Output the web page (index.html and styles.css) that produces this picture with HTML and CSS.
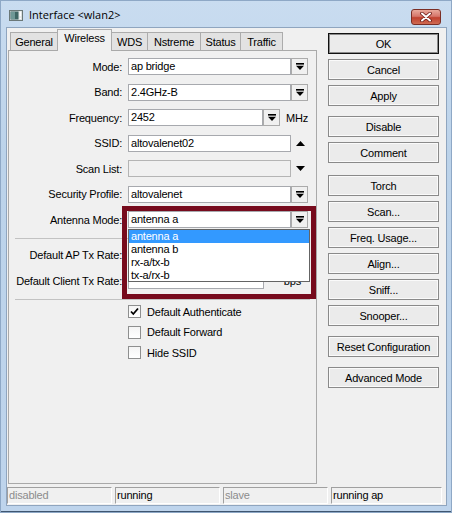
FILE: index.html
```html
<!DOCTYPE html>
<html>
<head>
<meta charset="utf-8">
<link rel="stylesheet" href="styles.css">
</head>
<body>
<div class="window">
  <div class="titlebar">
    <svg class="appicon" width="14" height="11" viewBox="0 0 14 11">
      <rect x="0.5" y="0.5" width="13" height="10" fill="#d8dede" stroke="#6b7878"/>
      <rect x="1.5" y="1.5" width="8" height="8" fill="#3f6664"/>
      <rect x="2" y="2" width="4" height="7" fill="#6f9896"/>
      <rect x="10.5" y="1.5" width="1.6" height="5" fill="#ffffff"/>
      <rect x="10.5" y="7.5" width="1.6" height="1.6" fill="#ffffff"/>
    </svg>
    <span class="title">Interface &lt;wlan2&gt;</span>
    <div class="close">
      <svg width="14" height="10" viewBox="0 0 14 10">
        <path d="M3 1.5 L11 8.5 M11 1.5 L3 8.5" stroke="#6a1a14" stroke-width="3.6" stroke-linecap="round"/>
        <path d="M3 1.5 L11 8.5 M11 1.5 L3 8.5" stroke="#ffffff" stroke-width="2" stroke-linecap="round"/>
      </svg>
    </div>
  </div>
  <div class="client">
    <div class="main">
      <div class="left">
        <div class="tabs">
          <div class="tab w-general">General</div>
          <div class="tab sel w-wireless">Wireless</div>
          <div class="tab w-wds">WDS</div>
          <div class="tab w-nstreme">Nstreme</div>
          <div class="tab w-status">Status</div>
          <div class="tab w-traffic">Traffic</div>
        </div>
        <div class="panel">
          <div class="form">
            <div class="row">
              <span class="lbl">Mode:</span>
              <div class="field long">ap bridge</div>
              <div class="ddbtn"><svg width="8" height="7" viewBox="0 0 8 7"><rect x="0" y="0" width="8" height="1.6"/><path d="M0 2.8H8L4 7Z"/></svg></div>
            </div>
            <div class="row">
              <span class="lbl">Band:</span>
              <div class="field long">2.4GHz-B</div>
              <div class="ddbtn"><svg width="8" height="7" viewBox="0 0 8 7"><rect x="0" y="0" width="8" height="1.6"/><path d="M0 2.8H8L4 7Z"/></svg></div>
            </div>
            <div class="row">
              <span class="lbl">Frequency:</span>
              <div class="field freq">2452</div>
              <div class="ddbtn"><svg width="8" height="7" viewBox="0 0 8 7"><rect x="0" y="0" width="8" height="1.6"/><path d="M0 2.8H8L4 7Z"/></svg></div>
              <span class="unit">MHz</span>
            </div>
            <div class="row">
              <span class="lbl">SSID:</span>
              <div class="field long">altovalenet02</div>
              <svg class="arrow" width="9" height="5" viewBox="0 0 9 5"><path d="M0 5H9L4.5 0Z"/></svg>
            </div>
            <div class="row">
              <span class="lbl">Scan List:</span>
              <div class="field long disabled"></div>
              <svg class="arrow" width="9" height="5" viewBox="0 0 9 5"><path d="M0 0H9L4.5 5Z"/></svg>
            </div>
            <div class="row">
              <span class="lbl">Security Profile:</span>
              <div class="field long">altovalenet</div>
              <div class="ddbtn"><svg width="8" height="7" viewBox="0 0 8 7"><rect x="0" y="0" width="8" height="1.6"/><path d="M0 2.8H8L4 7Z"/></svg></div>
            </div>
            <div class="row">
              <span class="lbl">Antenna Mode:</span>
              <div class="field long">antenna a</div>
              <div class="ddbtn"><svg width="8" height="7" viewBox="0 0 8 7"><rect x="0" y="0" width="8" height="1.6"/><path d="M0 2.8H8L4 7Z"/></svg></div>
            </div>
          </div>
          <div class="sep"></div>
          <div class="rates">
            <div class="row">
              <span class="lbl">Default AP Tx Rate:</span>
              <div class="field rate"></div>
              <span class="dash">-</span>
              <span class="bps">bps</span>
            </div>
            <div class="row">
              <span class="lbl">Default Client Tx Rate:</span>
              <div class="field rate"></div>
              <span class="dash">-</span>
              <span class="bps">bps</span>
            </div>
          </div>
          <div class="sep sep2"></div>
          <div class="checks">
            <div class="chk">
              <span class="box"><svg width="11" height="11" viewBox="0 0 11 11"><path d="M2 5.5 L4.3 8 L9 2.5" fill="none" stroke="#000" stroke-width="1.8"/></svg></span>
              <span class="chklbl">Default Authenticate</span>
            </div>
            <div class="chk">
              <span class="box"></span>
              <span class="chklbl">Default Forward</span>
            </div>
            <div class="chk">
              <span class="box"></span>
              <span class="chklbl">Hide SSID</span>
            </div>
          </div>
          <div class="highlight"></div>
          <div class="droplist">
            <div class="opt active">antenna a</div>
            <div class="opt">antenna b</div>
            <div class="opt">rx-a/tx-b</div>
            <div class="opt">tx-a/rx-b</div>
          </div>
        </div>
      </div>
      <div class="buttons">
        <div class="btn default">OK</div>
        <div class="btn">Cancel</div>
        <div class="btn">Apply</div>
        <div class="btn g10">Disable</div>
        <div class="btn">Comment</div>
        <div class="btn g12">Torch</div>
        <div class="btn">Scan...</div>
        <div class="btn">Freq. Usage...</div>
        <div class="btn">Align...</div>
        <div class="btn">Sniff...</div>
        <div class="btn">Snooper...</div>
        <div class="btn g10">Reset Configuration</div>
        <div class="btn g10">Advanced Mode</div>
      </div>
    </div>
    <div class="status">
      <div class="cell c1 dim">disabled</div>
      <div class="cell c2">running</div>
      <div class="cell c3 dim">slave</div>
      <div class="cell c4">running ap</div>
    </div>
  </div>
</div>
</body>
</html>
```

FILE: styles.css
```css
* { box-sizing: border-box; }

body {
  margin: 0;
  font-family: "Liberation Sans", Arial, sans-serif;
  font-size: 11px;
  letter-spacing: -0.2px;
  color: #000;
  background: #fff;
}

.window {
  width: 452px;
  height: 513px;
  padding-bottom: 8px;
  display: flex;
  flex-direction: column;
  background: linear-gradient(180deg, #c9dcf0 0%, #bcd3ea 30%, #bed4ec 100%);
  box-shadow: inset 0 0 0 1px #8ea8c6, inset 0 -2px 0 0 #3f5670;
}

.titlebar {
  height: 28px;
  flex: none;
  display: flex;
  align-items: flex-start;
}

.appicon {
  margin-top: 10px;
  margin-left: 9px;
  flex: none;
}

.title {
  margin-left: 6px;
  margin-top: 7px;
  line-height: 16px;
  font-family: "Open Sans", "Noto Sans", sans-serif;
  font-size: 11px;
  letter-spacing: 0;
  color: #000;
}

.close {
  margin-left: auto;
  margin-right: 11px;
  margin-top: 9px;
  width: 30px;
  height: 16px;
  border: 1px solid #7b2e25;
  border-radius: 3px;
  background: linear-gradient(180deg, #e9a99b 0%, #d6766a 45%, #c0412f 55%, #cf6a52 100%);
  display: flex;
  align-items: center;
  justify-content: center;
}

.client {
  margin: 0 6px 0 7px;
  height: 477px;
  flex: none;
  background: #f0f0f0;
  padding-top: 1px;
  display: flex;
  flex-direction: column;
  box-shadow: 0 0 0 1px #8fa5bf;
}

.main {
  display: flex;
  height: 455px;
  flex: none;
}

.left {
  margin-left: 1px;
  width: 309px;
  display: flex;
  flex-direction: column;
}

.tabs {
  height: 21px;
  display: flex;
  align-items: flex-end;
  padding-left: 2px;
  position: relative;
  z-index: 2;
}

.tab {
  height: 18px;
  border: 1px solid #acacac;
  border-bottom: none;
  margin-right: -1px;
  background: #e2e2e2;
  display: flex;
  align-items: center;
  justify-content: center;
  white-space: nowrap;
}

.tab.sel {
  height: 22px;
  margin-bottom: -1px;
  background: #f0f0f0;
  align-items: flex-start;
  padding-top: 2px;
  position: relative;
  z-index: 3;
}

.w-general { width: 48px; }
.w-wireless { width: 55px; }
.w-wds { width: 37px; }
.w-nstreme { width: 54px; }
.w-status { width: 41px; }
.w-traffic { width: 43px; }

.panel {
  height: 434px;
  border: 1px solid #a9a9a9;
  background: #f0f0f0;
  padding-top: 7px;
  position: relative;
  display: flex;
  flex-direction: column;
}

.form {
  display: flex;
  flex-direction: column;
  gap: 8.5px;
}

.row {
  display: flex;
  align-items: center;
  height: 17px;
}

.lbl {
  width: 113px;
  flex: none;
  margin-right: 6px;
  text-align: right;
  white-space: nowrap;
}

.field {
  height: 17px;
  flex: none;
  border: 1px solid #a7a9ae;
  background: #fff;
  padding-left: 2px;
  line-height: 15px;
  white-space: nowrap;
}

.field.long { width: 163px; }
.field.freq { width: 135px; }
.field.rate { width: 136px; }
.field.disabled { background: #f0f0f0; border-color: #b4b4b4; }

.ddbtn {
  width: 17px;
  height: 17px;
  flex: none;
  border: 1px solid #ababab;
  background: #f0f0f0;
  display: flex;
  align-items: center;
  justify-content: center;
}

.unit {
  margin-left: 6px;
}

.arrow {
  margin-left: 5px;
  flex: none;
}

.sep {
  height: 1px;
  background: #c2c2c2;
  margin: 10px 6px 0 6px;
  flex: none;
}

.rates {
  margin-top: 7px;
  display: flex;
  flex-direction: column;
  gap: 9px;
}

.dash {
  margin-left: 7px;
  font-size: 9px;
}

.bps {
  margin-left: 10px;
}

.checks {
  margin-top: 5px;
  padding-left: 119px;
  display: flex;
  flex-direction: column;
  gap: 7.5px;
}

.chk {
  display: flex;
  align-items: center;
  height: 13px;
}

.box {
  width: 13px;
  height: 13px;
  flex: none;
  border: 1px solid #8e8f8f;
  background: linear-gradient(180deg, #f4f4f4, #ffffff);
  display: flex;
  align-items: center;
  justify-content: center;
}

.chklbl {
  margin-left: 6px;
  white-space: nowrap;
}

.highlight {
  position: absolute;
  left: 113px;
  top: 155px;
  width: 194px;
  height: 93px;
  border: 5px solid #770b1d;
}

.droplist {
  position: absolute;
  left: 119px;
  top: 178px;
  width: 182px;
  height: 53px;
  border: 1px solid #646464;
  background: #fff;
  z-index: 4;
}

.opt {
  height: 13px;
  line-height: 13px;
  padding-left: 2px;
  white-space: nowrap;
}

.opt.active {
  background: #3399ff;
  color: #fff;
}

.buttons {
  margin-left: 11px;
  width: 111px;
  display: flex;
  flex-direction: column;
  padding-top: 4px;
}

.btn {
  height: 21px;
  flex: none;
  margin-top: 5px;
  border: 1px solid #8a8a8a;
  background: #ebebeb;
  box-shadow: inset 0 0 0 1px #fafafa;
  display: flex;
  align-items: center;
  justify-content: center;
  white-space: nowrap;
}

.btn.default {
  margin-top: 0;
  border-color: #111;
  box-shadow: inset 0 0 0 1px #8a8a8a;
}

.btn.g10 { margin-top: 10px; }
.btn.g12 { margin-top: 12px; }

.status {
  margin-top: 3px;
  height: 17px;
  flex: none;
  display: flex;
  gap: 3px;
}

.cell {
  height: 17px;
  border-top: 1px solid #a0a0a0;
  border-left: 1px solid #a0a0a0;
  border-right: 1px solid #ffffff;
  border-bottom: 1px solid #ffffff;
  padding-left: 1px;
  line-height: 15px;
  white-space: nowrap;
}

.c1, .c2, .c3 { width: 105px; }
.c4 { width: 111px; }

.dim { color: #8c8c8c; }
```
